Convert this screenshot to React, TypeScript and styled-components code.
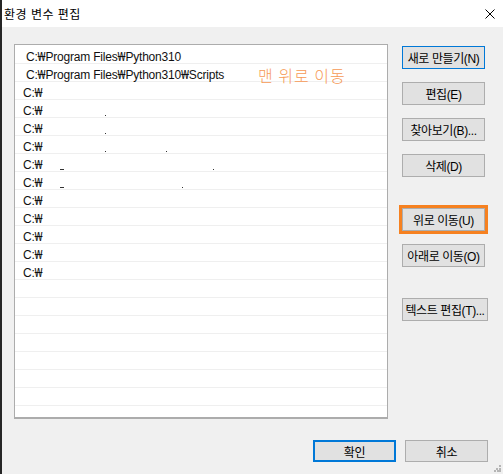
import * as React from 'react';
import styled, { createGlobalStyle } from 'styled-components';

const GlobalStyle = createGlobalStyle`
  html, body {
    margin: 0;
    padding: 0;
    background: #f0f0f0;
  }
  body {
    font-family: "Liberation Sans", "Noto Sans CJK KR", sans-serif;
  }
`;

const Window = styled.div`
  position: relative;
  width: 503px;
  height: 474px;
  box-sizing: border-box;
  border-left: 2px solid #262626;
  display: flex;
  flex-direction: column;
  background: #f0f0f0;
  overflow: hidden;
`;

const TitleBar = styled.div`
  height: 27px;
  flex: none;
  background: #ffffff;
  display: flex;
  align-items: center;
  justify-content: space-between;
  padding: 0 8px 0 2px;
`;

const Title = styled.span`
  font-size: 12px;
  letter-spacing: 0.5px;
  color: #000;
`;

const Body = styled.div`
  flex: 1;
  display: flex;
  flex-direction: column;
  padding: 17px 15px 0 12px;
`;

const Main = styled.div`
  display: flex;
  align-items: flex-start;
`;

const ListBox = styled.div`
  position: relative;
  width: 377px;
  height: 375px;
  box-sizing: border-box;
  border: 1px solid #acacac;
  border-bottom-width: 2px;
  background: #ffffff;
  padding-top: 1px;
  overflow: hidden;
`;

const Row = styled.div<{ $indent: number }>`
  position: relative;
  height: 18px;
  box-sizing: border-box;
  border-bottom: 1px solid #efefef;
  padding: 2px 0 0 ${({ $indent }) => $indent}px;
  font-size: 12px;
  line-height: 17px;
  letter-spacing: -0.2px;
  color: #111;
  white-space: nowrap;
`;

const Won = styled.span`
  font-family: "Noto Sans", "DejaVu Sans", sans-serif;
  font-size: 12px;
`;

const Mark = styled.span<{ $x: number; $w: number }>`
  position: absolute;
  left: ${({ $x }) => $x}px;
  bottom: 1px;
  width: ${({ $w }) => $w}px;
  height: 1px;
  background: #333;
`;

const Annotation = styled.span`
  position: absolute;
  left: 243px;
  top: 18px;
  font-family: "Noto Sans CJK KR", sans-serif;
  font-size: 16px;
  font-weight: 300;
  color: #f69a55;
  letter-spacing: 1px;
`;

const Side = styled.div`
  margin-left: 14px;
  padding-top: 2px;
  display: flex;
  flex-direction: column;
  gap: 31px;
`;

const Group = styled.div`
  display: flex;
  flex-direction: column;
  gap: 13px;
`;

const Button = styled.button<{ $primary?: boolean; $wide?: boolean; $highlight?: boolean }>`
  width: ${({ $wide }) => ($wide ? 86 : 83)}px;
  height: 23px;
  box-sizing: border-box;
  padding: 0;
  background: #e1e1e1;
  border: 1px solid ${({ $primary }) => ($primary ? '#0078d7' : '#adadad')};
  font-family: "Liberation Sans", "Noto Sans CJK KR", sans-serif;
  font-size: 12px;
  letter-spacing: -0.4px;
  color: #000;
  white-space: nowrap;
  overflow: hidden;
  ${({ $highlight }) => ($highlight ? 'outline: 3px solid #f68120; outline-offset: 0;' : '')}
`;

const Footer = styled.div`
  margin-top: 21px;
  display: flex;
  justify-content: flex-end;
  gap: 9px;
`;

const FooterButton = styled(Button)`
  height: 22px;
  ${({ $primary }) => ($primary ? 'border-width: 2px;' : '')}
`;

const Grip = styled.svg`
  position: absolute;
  right: 2px;
  bottom: 2px;
`;

const rows: { parts: string[]; indent: number; marks?: [number, number][] }[] = [
  { parts: ['C:', 'Program Files', 'Python310'], indent: 11 },
  { parts: ['C:', 'Program Files', 'Python310', 'Scripts'], indent: 11 },
  { parts: ['C:', ''], indent: 8 },
  { parts: ['C:', ''], indent: 8, marks: [[90, 1]] },
  { parts: ['C:', ''], indent: 8, marks: [[90, 1]] },
  { parts: ['C:', ''], indent: 8, marks: [[90, 1], [151, 1]] },
  { parts: ['C:', ''], indent: 8, marks: [[45, 4], [198, 1]] },
  { parts: ['C:', ''], indent: 8, marks: [[45, 4], [167, 1]] },
  { parts: ['C:', ''], indent: 8 },
  { parts: ['C:', ''], indent: 8 },
  { parts: ['C:', ''], indent: 8 },
  { parts: ['C:', ''], indent: 8 },
  { parts: ['C:', ''], indent: 8 },
];

const PathText: React.FC<{ parts: string[] }> = ({ parts }) => (
  <>
    {parts.map((p, i) => (
      <React.Fragment key={i}>
        {i > 0 && <Won>₩</Won>}
        {p}
      </React.Fragment>
    ))}
  </>
);

const App: React.FC = () => {
  const emptyRows = 21 - rows.length;

  return (
    <Window>
      <GlobalStyle />
      <TitleBar>
        <Title>환경 변수 편집</Title>
        <svg width="10" height="10" viewBox="0 0 10 10">
          <path d="M0.5 0.5 L9.5 9.5 M9.5 0.5 L0.5 9.5" stroke="#000" strokeWidth="1" />
        </svg>
      </TitleBar>
      <Body>
        <Main>
          <ListBox>
            {rows.map((r, i) => (
              <Row key={i} $indent={r.indent}>
                <PathText parts={r.parts} />
                {r.marks && r.marks.map(([x, w], j) => <Mark key={j} $x={x} $w={w} />)}
              </Row>
            ))}
            {Array.from({ length: emptyRows }).map((_, i) => (
              <Row key={`e${i}`} $indent={8} />
            ))}
            <Annotation>맨 위로 이동</Annotation>
          </ListBox>
          <Side>
            <Group>
              <Button $primary>새로 만들기(N)</Button>
              <Button>편집(E)</Button>
              <Button>찾아보기(B)...</Button>
              <Button>삭제(D)</Button>
            </Group>
            <Group>
              <Button $highlight>위로 이동(U)</Button>
              <Button>아래로 이동(O)</Button>
            </Group>
            <Group>
              <Button $wide>텍스트 편집(T)...</Button>
            </Group>
          </Side>
        </Main>
        <Footer>
          <FooterButton $primary>확인</FooterButton>
          <FooterButton>취소</FooterButton>
        </Footer>
      </Body>
      <Grip width="7" height="7" viewBox="0 0 7 7">
        <rect x="5" y="0" width="2" height="2" fill="#b5b5b5" />
        <rect x="2" y="3" width="2" height="2" fill="#b5b5b5" />
        <rect x="5" y="3" width="2" height="2" fill="#b5b5b5" />
        <rect x="0" y="5" width="2" height="2" fill="#b5b5b5" />
        <rect x="3" y="5" width="2" height="2" fill="#b5b5b5" />
        <rect x="5" y="5" width="2" height="2" fill="#b5b5b5" />
      </Grip>
    </Window>
  );
};

export default App;
